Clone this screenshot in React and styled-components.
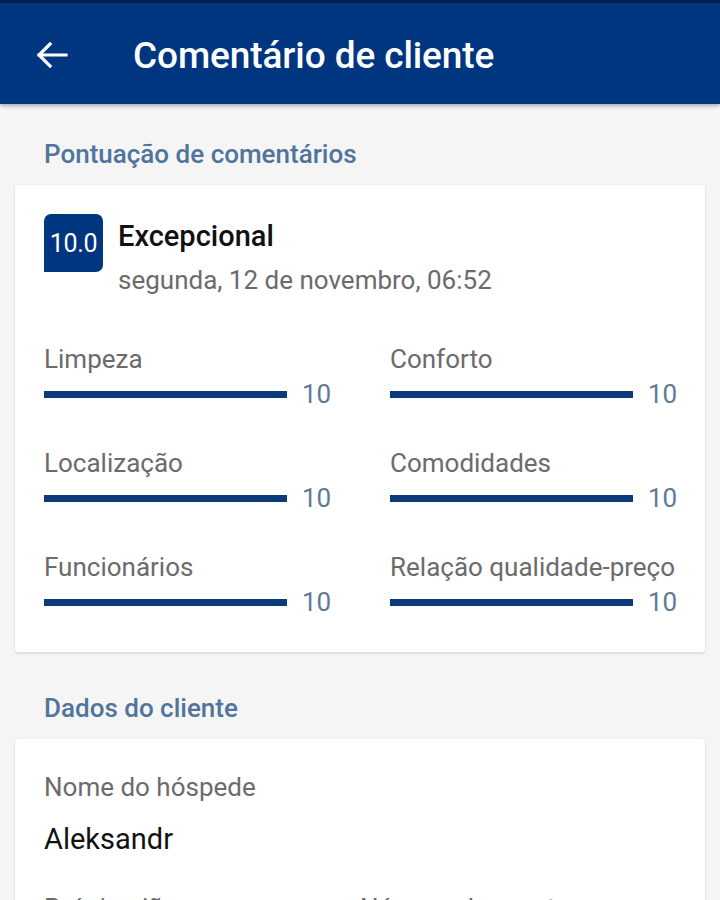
import React from "react";
import styled, { createGlobalStyle } from "styled-components";

const scores = [
  { label: "Limpeza", value: 10 },
  { label: "Conforto", value: 10 },
  { label: "Localização", value: 10 },
  { label: "Comodidades", value: 10 },
  { label: "Funcionários", value: 10 },
  { label: "Relação qualidade-preço", value: 10 },
];

const App = () => {
  return (
    <Page>
      <GlobalStyle />
      <TopBar>
        <BackButton>
          <svg width="32" height="26" viewBox="0 0 32 26" fill="none">
            <path
              d="M3 13H30M14 2L3 13l11 11"
              stroke="#fff"
              strokeWidth="3.2"
              strokeLinecap="square"
            />
          </svg>
        </BackButton>
        <Title>Comentário de cliente</Title>
      </TopBar>

      <SectionTitle $top={34}>Pontuação de comentários</SectionTitle>
      <Card $pad="29px 29px 35px">
        <ReviewHead>
          <Badge>10.0</Badge>
          <HeadText>
            <Verdict>Excepcional</Verdict>
            <DateLine>segunda, 12 de novembro, 06:52</DateLine>
          </HeadText>
        </ReviewHead>
        <ScoreGrid>
          {scores.map((s) => (
            <Score key={s.label}>
              <Label>{s.label}</Label>
              <BarRow>
                <Track>
                  <Fill style={{ width: `${s.value * 10}%` }} />
                </Track>
                <Value>{s.value}</Value>
              </BarRow>
            </Score>
          ))}
        </ScoreGrid>
      </Card>

      <SectionTitle $top={40}>Dados do cliente</SectionTitle>
      <Card $pad="33px 29px 40px">
        <Label>Nome do hóspede</Label>
        <Name>Aleksandr</Name>
        <InfoGrid>
          <Label>País/região</Label>
          <Label>Número de quartos</Label>
        </InfoGrid>
      </Card>
    </Page>
  );
};

export default App;

const GlobalStyle = createGlobalStyle`
  html, body {
    margin: 0;
    padding: 0;
    background: #f5f5f5;
  }
  body {
    font-family: Roboto, "Noto Sans", "Liberation Sans", sans-serif;
    -webkit-font-smoothing: antialiased;
  }
`;

const Page = styled.div`
  width: 720px;
  min-height: 900px;
  background: #f5f5f5;
  overflow: hidden;
`;

const TopBar = styled.header`
  height: 101px;
  background: #003580;
  border-top: 3px solid #00224f;
  display: flex;
  align-items: center;
  box-shadow: 0 2px 4px rgba(0, 0, 0, 0.3);
  position: relative;
`;

const BackButton = styled.div`
  width: 36px;
  margin-left: 36px;
  display: flex;
  align-items: center;
  margin-top: 2px;
`;

const Title = styled.h1`
  margin: 3px 0 0 61px;
  color: #fff;
  font-size: 37px;
  font-weight: 500;
  letter-spacing: -0.1px;
`;

const SectionTitle = styled.h2`
  margin: 0;
  padding: ${(p) => p.$top}px 44px 15px;
  line-height: 32px;
  font-size: 26px;
  font-weight: 500;
  color: #50749c;
`;

const Card = styled.section`
  margin: 0 15px;
  background: #fff;
  border-radius: 3px;
  box-shadow: 0 1px 3px rgba(0, 0, 0, 0.16);
  padding: ${(p) => p.$pad};
`;

const ReviewHead = styled.div`
  display: flex;
  gap: 15px;
`;

const Badge = styled.div`
  width: 59px;
  height: 58px;
  background: #003580;
  color: #fff;
  border-radius: 7px 7px 7px 0;
  display: flex;
  align-items: center;
  justify-content: center;
  font-size: 25px;
  letter-spacing: -0.3px;
  flex-shrink: 0;
`;

const HeadText = styled.div`
  display: flex;
  flex-direction: column;
  gap: 12px;
  padding-top: 6px;
`;

const Verdict = styled.div`
  font-size: 29px;
  line-height: 32px;
  font-weight: 500;
  color: #111;
`;

const DateLine = styled.div`
  font-size: 26px;
  line-height: 32px;
  color: #6b6b6b;
`;

const ScoreGrid = styled.div`
  display: grid;
  grid-template-columns: 1fr 1fr;
  column-gap: 60px;
  row-gap: 39px;
  margin-top: 48px;
`;

const Score = styled.div`
  display: flex;
  flex-direction: column;
  gap: 5px;
`;

const Label = styled.div`
  font-size: 26px;
  line-height: 30px;
  color: #6b6b6b;
  white-space: nowrap;
`;

const BarRow = styled.div`
  display: flex;
  align-items: center;
  gap: 15px;
  height: 30px;
`;

const Track = styled.div`
  flex: 1;
  height: 7px;
  background: #e6e6e6;
`;

const Fill = styled.div`
  height: 100%;
  background: #0c3b7c;
`;

const Value = styled.div`
  width: 28px;
  font-size: 26px;
  color: #5e7a98;
  white-space: nowrap;
`;

const Name = styled.div`
  margin-top: 20px;
  font-size: 29px;
  line-height: 34px;
  color: #111;
`;

const InfoGrid = styled.div`
  display: grid;
  grid-template-columns: 1fr 1fr;
  margin-top: 37px;
`;
